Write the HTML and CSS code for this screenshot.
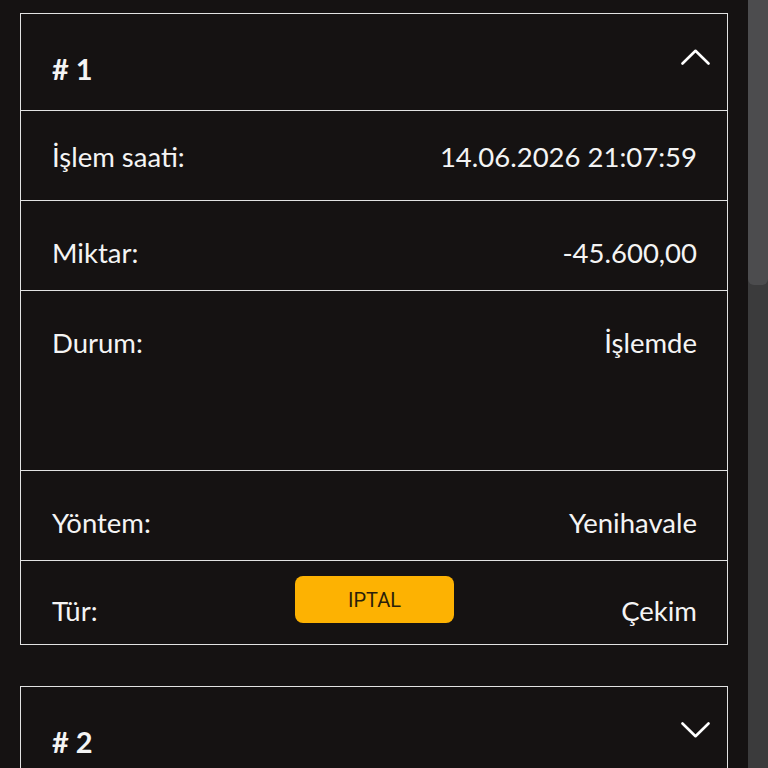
FILE: index.html
```html
<!DOCTYPE html>
<html lang="tr">
<head>
<meta charset="utf-8">
<title>İşlemler</title>
<link rel="stylesheet" href="styles.css">
</head>
<body>
<div class="page">
  <main class="content">
    <section class="card">
      <header class="card-head">
        <span class="card-title"># 1</span>
        <svg class="chevron" width="29" height="16" viewBox="0 0 29 16"><path d="M1.5 14.5 L14.5 1.8 L27.5 14.5" fill="none" stroke="#fff" stroke-width="2.6" stroke-linecap="round" stroke-linejoin="round"/></svg>
      </header>
      <div class="row row-first"><span>İşlem saati:</span><span>14.06.2026 21:07:59</span></div>
      <div class="row"><span>Miktar:</span><span>-45.600,00</span></div>
      <div class="row row-tall"><span>Durum:</span><span>İşlemde</span></div>
      <div class="row"><span>Yöntem:</span><span>Yenihavale</span></div>
      <div class="row row-type">
        <span class="cell-left">Tür:</span>
        <button class="cancel-btn" type="button">IPTAL</button>
        <span class="cell-right">Çekim</span>
      </div>
    </section>
    <section class="card">
      <header class="card-head">
        <span class="card-title"># 2</span>
        <svg class="chevron" width="29" height="16" viewBox="0 0 29 16"><path d="M1.5 1.5 L14.5 14.2 L27.5 1.5" fill="none" stroke="#fff" stroke-width="2.6" stroke-linecap="round" stroke-linejoin="round"/></svg>
      </header>
    </section>
  </main>
  <div class="scrollbar"><div class="scroll-thumb"></div></div>
</div>
</body>
</html>
```
FILE: styles.css
```css
* { box-sizing: border-box; }
html, body {
  margin: 0;
  height: 768px;
  overflow: hidden;
  background: #151212;
  color: #f4f4f4;
  font-family: Lato, "Noto Sans", sans-serif;
}
.page {
  display: flex;
  height: 768px;
}
.content {
  flex: 1;
  padding: 13px 20px 0 20px;
  display: flex;
  flex-direction: column;
  gap: 41px;
  overflow: hidden;
}
.card {
  border: 1px solid #e2e2e2;
  flex-shrink: 0;
}
.card-head {
  display: flex;
  justify-content: space-between;
  align-items: flex-start;
  padding: 25px 17px 0 31px;
  height: 96px;
}
.card-title {
  font-weight: 700;
  font-size: 29px;
  line-height: 34px;
  margin-top: 13px;
}
.chevron {
  margin-top: 10px;
  display: block;
}
.row {
  display: flex;
  justify-content: space-between;
  align-items: flex-start;
  border-top: 1px solid #e2e2e2;
  padding: 35px 30px 0 31px;
  font-size: 27.5px;
  line-height: 34px;
  height: 90px;
}
.row-first {
  padding-top: 29px;
}
.row-tall {
  height: 180px;
}
.row-type {
  display: grid;
  grid-template-columns: 1fr auto 1fr;
  align-items: end;
  padding: 15px 30px 16px 31px;
  height: 84px;
}
.cell-right { text-align: right; }
.cancel-btn {
  align-self: start;
  width: 159px;
  height: 47px;
  border: none;
  border-radius: 8px;
  background: #fdb202;
  color: #2a1f0a;
  font-family: Roboto, "Noto Sans", sans-serif;
  font-size: 20px;
  padding: 0;
}
.scrollbar {
  width: 20px;
  background: #3b3b3c;
  flex-shrink: 0;
}
.scroll-thumb {
  height: 285px;
  background: #4c4c4e;
  border-radius: 0 0 6px 6px;
}
```
